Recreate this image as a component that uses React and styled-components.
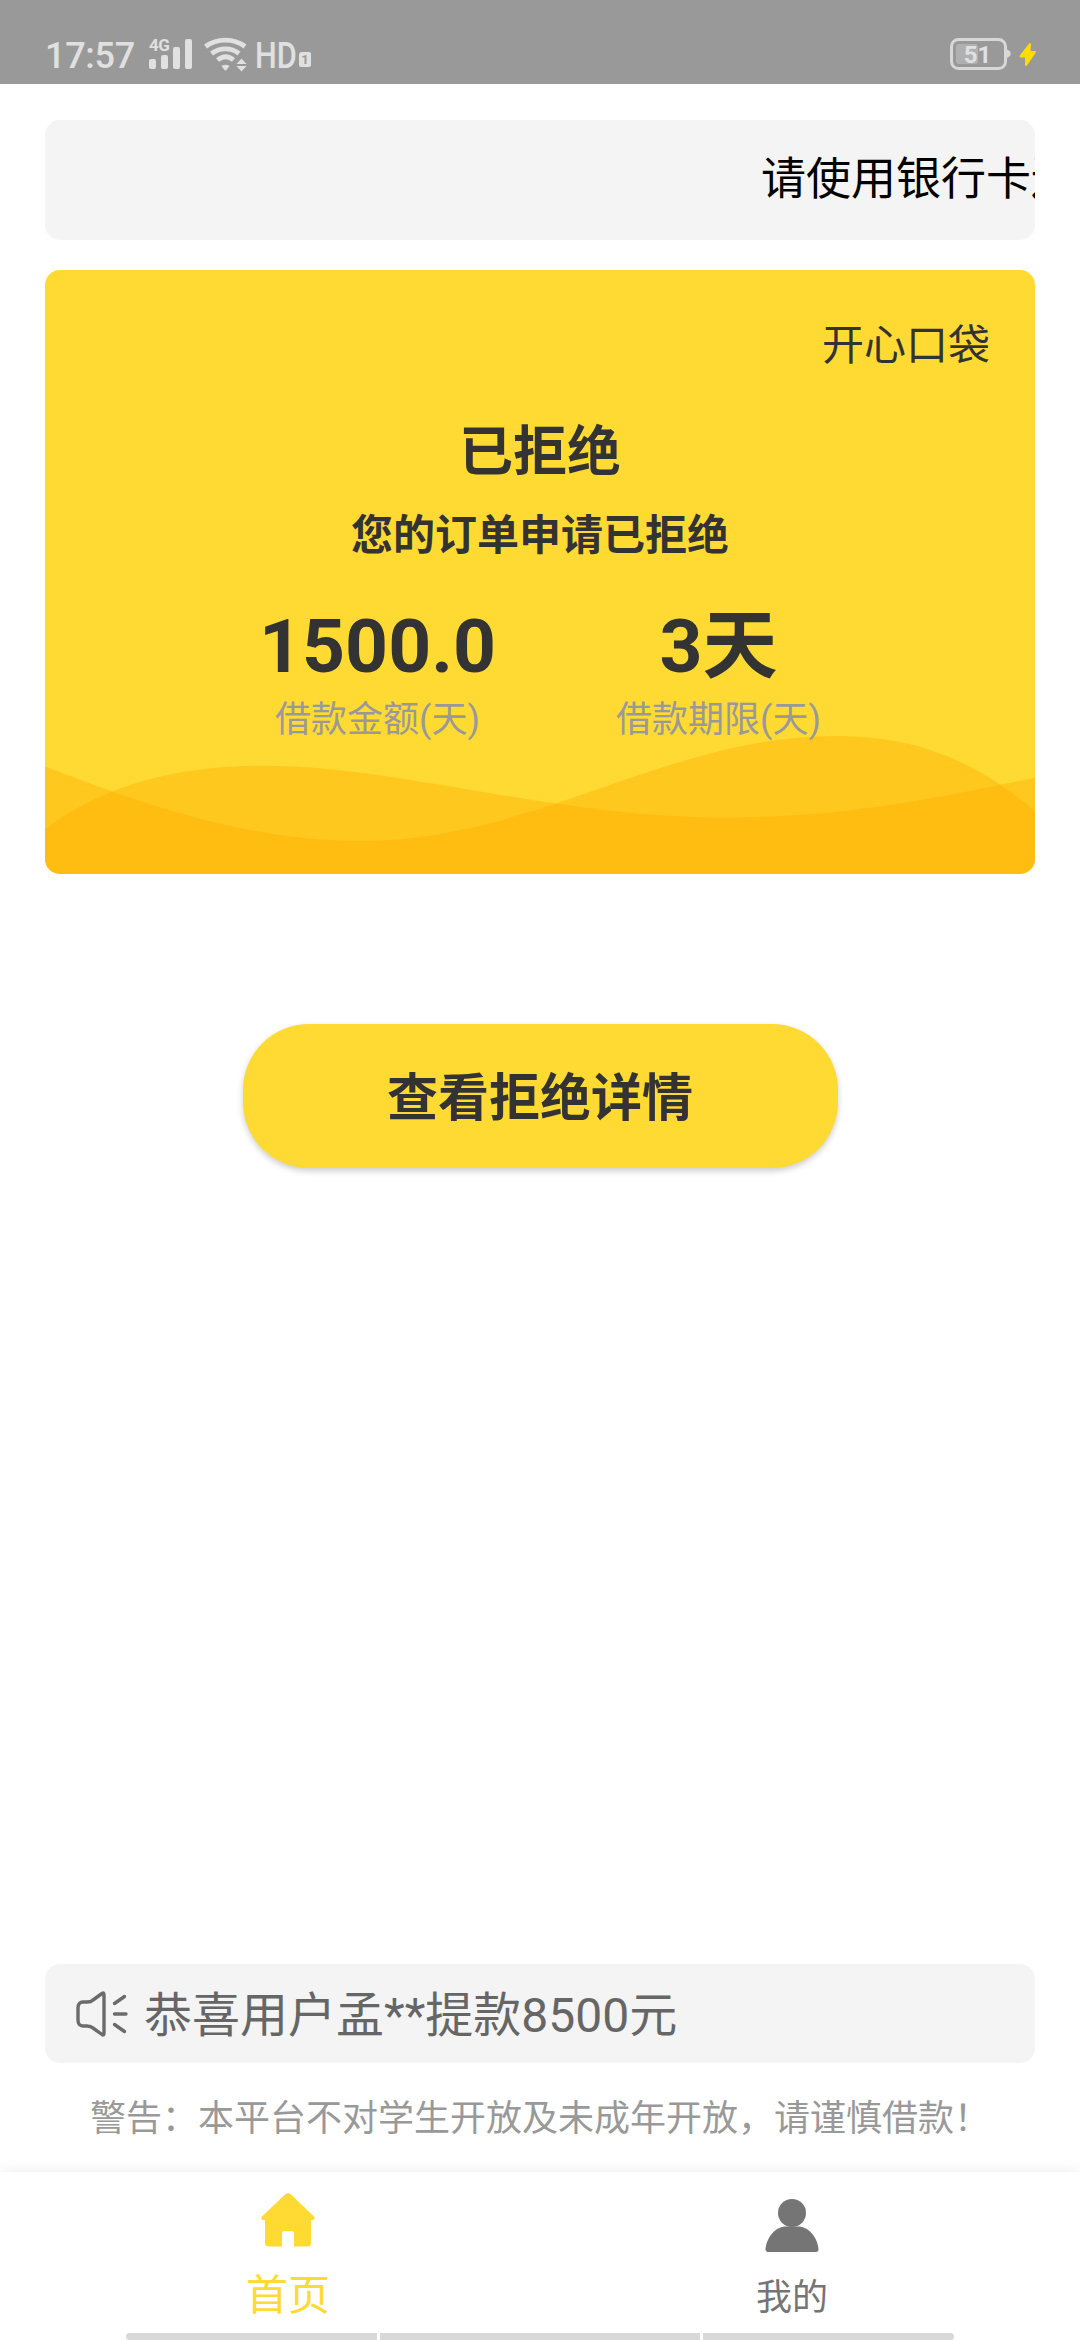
import React, {Component} from 'react';
import styled, {createGlobalStyle} from 'styled-components';

const GlobalStyle = createGlobalStyle`
  * {
    box-sizing: border-box;
  }

  body {
    margin: 0;
    background-color: #fff;
    font-family: Roboto, 'Noto Sans CJK SC', sans-serif;
  }
`;

const Container = styled.div`
  width: 1080px;
  height: 2340px;
  display: flex;
  flex-direction: column;
  background-color: #fff;
  overflow: hidden;
`;

const StatusBar = styled.header`
  height: 84px;
  flex-shrink: 0;
  display: flex;
  align-items: flex-start;
  padding: 36px 44px 0 45px;
  background-color: #999;
  color: #e0e0e0;

  svg {
    display: block;
  }
`;

const Time = styled.span`
  width: 103px;
  padding-top: 1px;
  font-size: 36px;
  font-weight: 500;
  line-height: 38px;
  letter-spacing: -0.3px;
  white-space: nowrap;
`;

const Signal = styled.div`
  position: relative;
  width: 56px;
  height: 34px;

  span {
    position: absolute;
    top: 1px;
    left: 1px;
    font-size: 17px;
    font-weight: 700;
    line-height: 16px;
    letter-spacing: -0.5px;
  }
`;

const Hd = styled.span`
  width: 44px;
  padding-top: 1px;
  font-size: 37px;
  font-weight: 500;
  line-height: 38px;
  transform: scaleX(0.83);
  transform-origin: left;
`;

const SimSlot = styled.span`
  width: 12px;
  height: 15px;
  margin-top: 16px;
  border-radius: 3px 2px 2px 2px;
  background-color: #e0e0e0;
  color: #999;
  font-size: 13px;
  font-weight: 700;
  line-height: 15px;
  text-align: center;
`;

const Battery = styled.div`
  position: relative;
  width: 69px;
  height: 34px;
  margin-left: auto;

  span {
    position: absolute;
    top: 4px;
    left: 0;
    width: 55px;
    font-size: 24px;
    font-weight: 700;
    line-height: 30px;
    text-align: center;
  }
`;

const Content = styled.main`
  flex: 1;
  display: flex;
  flex-direction: column;
  padding: 36px 45px 0;
`;

const Marquee = styled.div`
  height: 120px;
  padding-left: 716px;
  border-radius: 15px;
  background-color: #f4f4f4;
  color: #000;
  font-size: 45px;
  line-height: 120px;
  white-space: nowrap;
  overflow: hidden;
`;

const Card = styled.section`
  position: relative;
  height: 604px;
  margin-top: 30px;
  padding-top: 46px;
  border-radius: 15px;
  background-color: #ffda33;
  color: #333;
  text-align: center;
  overflow: hidden;
`;

const Waves = styled.svg`
  position: absolute;
  left: 0;
  bottom: 0;
  display: block;
`;

const Brand = styled.div`
  position: relative;
  padding-right: 45px;
  font-size: 42px;
  line-height: 60px;
  text-align: right;
`;

const Title = styled.h1`
  position: relative;
  margin: 42px 0 0;
  font-size: 54px;
  font-weight: 700;
  line-height: 70px;
`;

const Subtitle = styled.p`
  position: relative;
  margin: 20px 0 0;
  font-size: 42px;
  font-weight: 700;
  line-height: 56px;
`;

const Figures = styled.div`
  position: relative;
  display: flex;
  justify-content: center;
  gap: 102px;
  margin-top: 37px;
  padding-left: 16px;
`;

const Figure = styled.div`
  width: 239px;

  strong {
    display: block;
    font-size: 75px;
    font-weight: 700;
    line-height: 90px;
    white-space: nowrap;
  }

  span {
    display: block;
    margin-top: 4px;
    color: #999;
    font-size: 36px;
    line-height: 50px;
    white-space: nowrap;
  }
`;

const DetailButton = styled.button`
  width: 595px;
  height: 144px;
  margin: 150px auto 0;
  padding: 0 0 4px;
  border: 0;
  border-radius: 66px;
  background-color: #ffda33;
  box-shadow: 0 3px 6px rgba(0, 0, 0, 0.2);
  color: #333;
  font-family: inherit;
  font-size: 51px;
  font-weight: 700;
  cursor: pointer;
`;

const News = styled.div`
  height: 99px;
  display: flex;
  align-items: center;
  margin-top: auto;
  padding-left: 30px;
  border-radius: 15px;
  background-color: #f4f4f4;
  color: #666;
  font-size: 48px;

  span {
    margin-left: 15px;
    padding-top: 4px;
    line-height: 60px;
  }
`;

const Warning = styled.p`
  height: 50px;
  margin: 31px 0 28px;
  color: #999;
  font-size: 36px;
  line-height: 50px;
  text-align: center;
  white-space: nowrap;
`;

const TabBar = styled.nav`
  height: 161px;
  flex-shrink: 0;
  display: flex;
  justify-content: center;
  background-color: #fff;
  box-shadow: 0 0 14px rgba(0, 0, 0, 0.08);
`;

const Tab = styled.div`
  width: 504px;
  display: flex;
  flex-direction: column;
  align-items: center;
  padding-top: ${props => props.$active ? 20 : 26}px;
  color: ${props => props.$active ? '#ffda33' : '#757575'};
  font-size: ${props => props.$active ? 42 : 36}px;

  span {
    margin-top: ${props => props.$active ? 18 : 16}px;
    line-height: 60px;
  }
`;

const GestureBar = styled.div`
  height: 7px;
  flex-shrink: 0;
  display: grid;
  grid-template-columns: 251px 320px 251px;
  justify-content: center;
  gap: 3px;
  background-color: #fff;

  i {
    background-color: #d8d8d8;
  }

  i:first-child {
    border-radius: 5px 0 0 5px;
  }

  i:last-child {
    border-radius: 0 5px 5px 0;
  }
`;

const SignalIcon = () => (
  <svg width='56' height='34' fill='#e0e0e0'>
    <rect x='1' y='23' width='7' height='10' rx='2' />
    <rect x='13' y='19' width='7' height='14' rx='2' />
    <rect x='25' y='11' width='7' height='22' rx='2' />
    <rect x='37' y='3' width='7' height='30' rx='2' />
  </svg>
);

const WifiIcon = () => (
  <svg width='51' height='36' fill='none' stroke='#e0e0e0' strokeWidth='4.8'>
    <path d='M1.500 10.500C13.500 2 29.500 2 41 10.500' />
    <path d='M7.500 17.500C16 11.200 27 11.200 35 17.500' />
    <path d='M13.500 24C19 19.600 24.500 19.600 29.500 24' />
    <path fill='#e0e0e0' stroke='none' d='M17.500 30C20 28.300 23 28.300 25.500 30L22.300 34.200Q21.500 35 20.700 34.200Z' />
    <path fill='#e0e0e0' stroke='none' d='M37.500 22.500L42.500 28H32.500ZM32.500 30H42.500L37.500 35.500Z' />
  </svg>
);

const BatteryIcon = () => (
  <svg width='69' height='36'>
    <rect x='6' y='8' width='22' height='20' rx='3' fill='#b0b0b0' />
    <rect x='1.500' y='3.500' width='54' height='29' rx='7' fill='none' stroke='#d8d8d8' strokeWidth='3' />
    <path d='M57 13.500C62 15 62 20 57 22Z' fill='#d8d8d8' />
  </svg>
);

const BoltIcon = () => (
  <svg width='17' height='34' viewBox='0 0 17 34'>
    <path d='M10.500 7Q12 6.500 12 8.500L11.500 15H16Q17.500 15.200 16.500 17L8 29.500Q6.300 30.800 6 29V21.500H1.500Q-.2 21 .800 19.500Z' fill='#ffdb00' />
  </svg>
);

const SpeakerIcon = () => (
  <svg width='54' height='48' fill='none' stroke='#6b6b6b' strokeWidth='3.4' strokeLinecap='round' strokeLinejoin='round'>
    <path d='M3 18Q3 12 8 12H12Q16 12 18 10L27 3.500Q29 2 29 5V43Q29 46 27 44.500L18 38Q16 36 12 36H8Q3 36 3 30Z' />
    <path d='M39.500 13.500L49.500 6.500M39.500 24H51M39.500 34.500L49.500 41.500' />
  </svg>
);

const HomeIcon = () => (
  <svg width='54' height='56' fill='#ffda33'>
    <path d='M24 2.500Q27 .200 30 2.500L53 24.500Q55 28 51 28H50V51Q50 54.500 46.500 54.500H33V41.500Q33 39 30.500 39H23.500Q21 39 21 41.500V54.500H8Q4 54.500 4 51V28H3Q-1 28 1 24.500Z' />
  </svg>
);

const UserIcon = () => (
  <svg width='54' height='54' fill='#757575'>
    <circle cx='27' cy='15' r='14' />
    <path d='M.500 51C2 38 11 28.500 21 28.500H33C43 28.500 52 38 53.500 51Q53.500 54 51 54H3Q.500 54 .500 51Z' />
  </svg>
);

export default class App extends Component {

  state = {
    tab: 'home',
  }

  render(){
    const {tab} = this.state;

    return(
      <Container>
        <GlobalStyle />
        <StatusBar>
          <Time>17:57</Time>
          <Signal>
            <SignalIcon />
            <span>4G</span>
          </Signal>
          <WifiIcon />
          <Hd>HD</Hd>
          <SimSlot>1</SimSlot>
          <Battery>
            <BatteryIcon />
            <span>51</span>
          </Battery>
          <BoltIcon />
        </StatusBar>
        <Content>
          <Marquee>请使用银行卡还款</Marquee>
          <Card>
            <Waves width='990' height='604' fill='#ffad00' fillOpacity='0.4'>
              <path d='M0 559C65 511 140 495.700 219 495.700C355 495.700 510 547.500 677 547.500C800 547.500 890 528 990 507.700V604H0Z' />
              <path d='M0 496.500C105 537 205 571 316 571C490 571 620 466 791 466C870 466 930 490 990 541V604H0Z' />
            </Waves>
            <Brand>开心口袋</Brand>
            <Title>已拒绝</Title>
            <Subtitle>您的订单申请已拒绝</Subtitle>
            <Figures>
              <Figure>
                <strong>1500.0</strong>
                <span>借款金额(天)</span>
              </Figure>
              <Figure>
                <strong>3天</strong>
                <span>借款期限(天)</span>
              </Figure>
            </Figures>
          </Card>
          <DetailButton>查看拒绝详情</DetailButton>
          <News>
            <SpeakerIcon />
            <span>恭喜用户孟**提款8500元</span>
          </News>
          <Warning>警告：本平台不对学生开放及未成年开放，请谨慎借款！</Warning>
        </Content>
        <TabBar>
          <Tab $active={tab === 'home'} onClick={() => this.setState({tab: 'home'})}>
            <HomeIcon />
            <span>首页</span>
          </Tab>
          <Tab $active={tab === 'mine'} onClick={() => this.setState({tab: 'mine'})}>
            <UserIcon />
            <span>我的</span>
          </Tab>
        </TabBar>
        <GestureBar>
          <i />
          <i />
          <i />
        </GestureBar>
      </Container>
    )
  }
}
